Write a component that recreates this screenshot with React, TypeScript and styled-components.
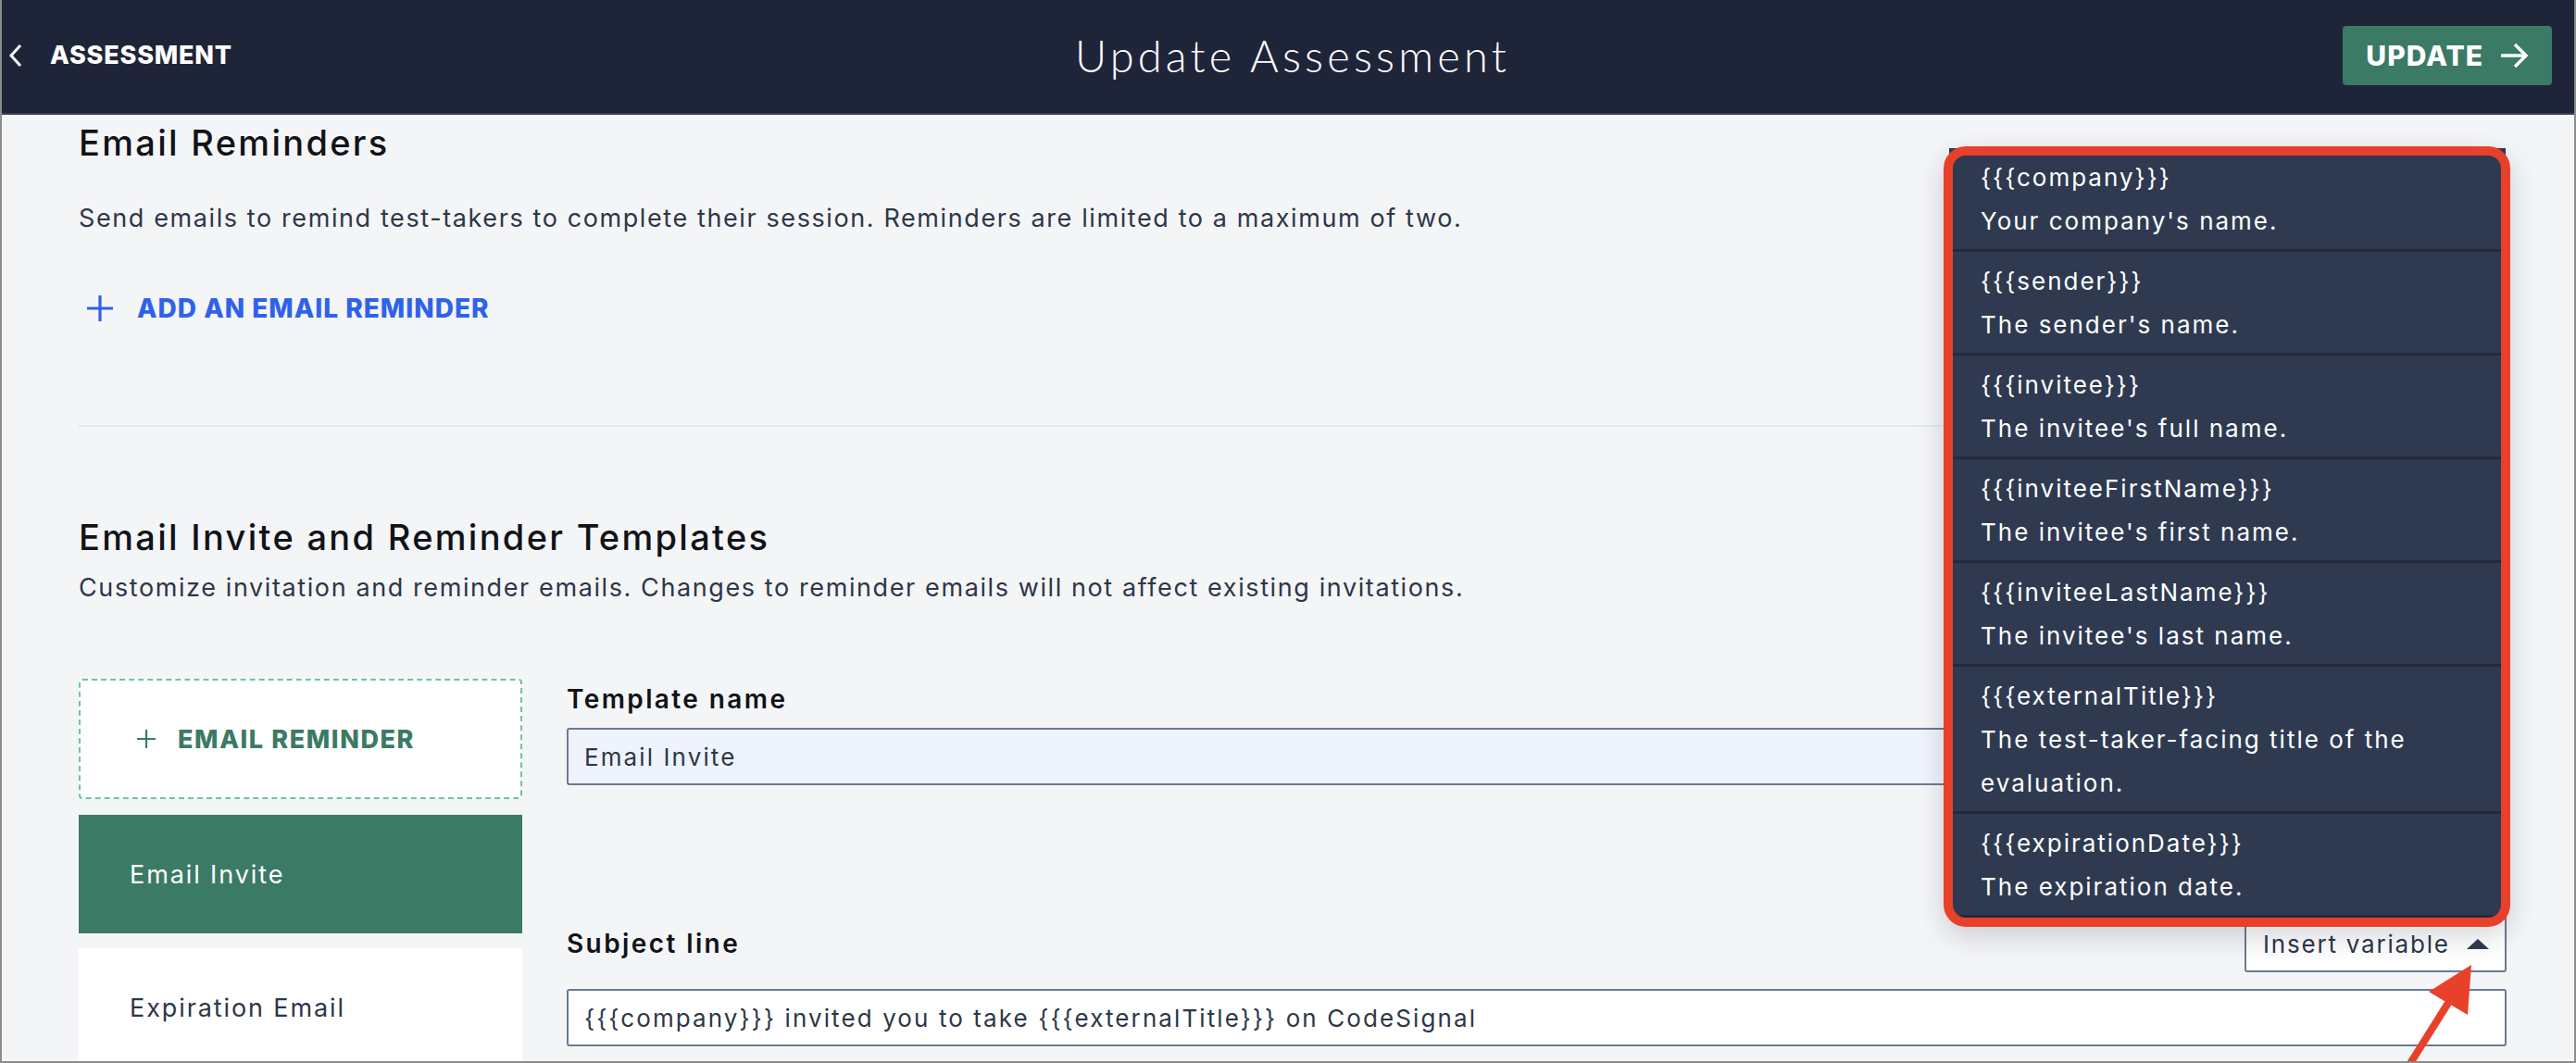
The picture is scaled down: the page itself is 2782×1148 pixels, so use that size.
import React from 'react'
import styled, {createGlobalStyle} from 'styled-components'

const GlobalStyle = createGlobalStyle`
  html, body {
    margin: 0;
    padding: 0;
  }

  body {
    font-family: Inter, "Noto Sans", sans-serif;
    background-color: #f4f5f7;
  }
`

interface Variable {
    name: string
    description: string
}

const variables: Variable[] = [
    {name: '{{{company}}}', description: 'Your company\'s name.'},
    {name: '{{{sender}}}', description: 'The sender\'s name.'},
    {name: '{{{invitee}}}', description: 'The invitee\'s full name.'},
    {name: '{{{inviteeFirstName}}}', description: 'The invitee\'s first name.'},
    {name: '{{{inviteeLastName}}}', description: 'The invitee\'s last name.'},
    {name: '{{{externalTitle}}}', description: 'The test-taker-facing title of the evaluation.'},
    {name: '{{{expirationDate}}}', description: 'The expiration date.'},
]

const Frame = styled.div`
  box-sizing: border-box;
  width: 2782px;
  height: 1148px;
  border: 2px solid #8c8c8c;
  border-top: none;
  overflow: hidden;
  display: flex;
  flex-direction: column;
  background-color: #f4f5f7;
`

const Header = styled.header`
  box-sizing: border-box;
  height: 124px;
  flex-shrink: 0;
  background-color: #1f2539;
  border-bottom: 2px solid #3a4058;
  display: grid;
  grid-template-columns: 1fr auto 1fr;
  align-items: center;
  padding: 0 16px 3px;
`

const BackLink = styled.div`
  margin-left: -8px;
  display: flex;
  align-items: center;
  gap: 30px;
  color: #ffffff;
  font-size: 27px;
  font-weight: 800;
  letter-spacing: 0.8px;
`

const Title = styled.h1`
  margin: 0;
  padding-left: 10px;
  font-family: Lato, sans-serif;
  font-size: 47px;
  font-weight: 300;
  letter-spacing: 4.2px;
  color: #ffffff;
`

const UpdateButton = styled.button`
  justify-self: end;
  margin-right: 8px;
  display: flex;
  align-items: center;
  gap: 18px;
  height: 64px;
  padding: 0 25px;
  border: none;
  border-radius: 4px;
  background-color: #3b7a65;
  color: #ffffff;
  font-family: inherit;
  font-size: 30px;
  font-weight: 800;
  letter-spacing: 1px;
`

const Content = styled.main`
  flex: 1;
  padding: 8px 73px 0 83px;
`

const SectionTitle = styled.h2<{ $top?: number }>`
  margin: ${(p) => p.$top || 0}px 0 0;
  font-size: 38px;
  line-height: 44px;
  font-weight: 500;
  letter-spacing: 2.3px;
  color: #111318;
`

const SectionText = styled.p<{ $top: number }>`
  margin: ${(p) => p.$top}px 0 0;
  font-size: 27px;
  line-height: 40px;
  letter-spacing: 1.6px;
  color: #2d3748;
`

const AddLink = styled.div`
  margin-top: 57px;
  padding-left: 9px;
  height: 40px;
  display: flex;
  align-items: center;
  gap: 26px;
  color: #2f62ea;
  font-size: 28px;
  font-weight: 800;
  letter-spacing: 1px;
`

const Divider = styled.hr`
  margin: 106px 0 0;
  height: 2px;
  border: none;
  background-color: #e2e7f6;
`

const Editor = styled.div`
  margin-top: 78px;
  display: grid;
  grid-template-columns: 479px 1fr;
  gap: 48px;
`

const Sidebar = styled.div`
  display: flex;
  flex-direction: column;
  gap: 16px;
`

const AddCard = styled.div`
  box-sizing: border-box;
  height: 130px;
  margin-bottom: 1px;
  padding-left: 61px;
  display: flex;
  align-items: center;
  gap: 24px;
  background-color: #ffffff;
  border: 2px dashed #6cc4a4;
  border-radius: 4px;
  color: #3b7a65;
  font-size: 27px;
  font-weight: 800;
  letter-spacing: 1.6px;
`

const TemplateCard = styled.div<{ $active?: boolean }>`
  height: 128px;
  flex-shrink: 0;
  padding-left: 55px;
  display: flex;
  align-items: center;
  background-color: ${(p) => p.$active ? '#3b7a65' : '#ffffff'};
  color: ${(p) => p.$active ? '#ffffff' : '#2d3748'};
  font-size: 27px;
  letter-spacing: 1.9px;
`

const Form = styled.div`
  display: flex;
  flex-direction: column;
`

const Label = styled.label<{ $top?: number }>`
  margin-top: ${(p) => p.$top ?? 4}px;
  font-size: 28px;
  line-height: 36px;
  font-weight: 600;
  letter-spacing: 2.4px;
  color: #111318;
`

const Field = styled.div<{ $top: number, $tinted?: boolean }>`
  box-sizing: border-box;
  height: 62px;
  margin-top: ${(p) => p.$top}px;
  padding: 0 17px;
  display: flex;
  align-items: center;
  background-color: ${(p) => p.$tinted ? '#eff3fc' : '#ffffff'};
  border: 2px solid #6b7a93;
  border-radius: 3px;
  color: #2d3748;
  font-size: 26px;
  letter-spacing: 2.1px;
`

const SubjectRow = styled.div`
  margin-top: 140px;
  display: flex;
  justify-content: space-between;
  align-items: center;
`

const InsertWrap = styled.div`
  position: relative;
`

const InsertButton = styled.button`
  box-sizing: border-box;
  width: 283px;
  height: 62px;
  padding: 0 17px 0 18px;
  display: flex;
  align-items: center;
  justify-content: space-between;
  background-color: #ffffff;
  border: 2px solid #6b7a93;
  border-radius: 3px;
  color: #2d3748;
  font-family: inherit;
  font-size: 26px;
  letter-spacing: 1.8px;
`

const Caret = styled.span`
  width: 0;
  height: 0;
  border-left: 12px solid transparent;
  border-right: 12px solid transparent;
  border-bottom: 11px solid #2d3a50;
`

const Menu = styled.ul`
  position: absolute;
  right: 1px;
  bottom: calc(100% - 3px);
  width: 601px;
  margin: 0;
  padding: 0;
  list-style: none;
  background-color: #2f3a51;
  border-radius: 0 0 10px 10px;
`

const MenuItem = styled.li`
  padding: 8px 60px 7px 34px;
  font-size: 26px;
  line-height: 47px;
  letter-spacing: 2px;
  color: #ffffff;
  border-bottom: 3px solid #232a3b;

  &:last-child {
    border-bottom: none;
  }
`

// callout ring drawn around the open menu
const Highlight = styled.div`
  position: absolute;
  top: -2px;
  left: -6px;
  right: -5px;
  bottom: -10px;
  border: 10px solid #e8402b;
  border-radius: 24px;
  box-shadow: 0 10px 30px rgba(20, 28, 45, 0.18);
  pointer-events: none;
`

const Pointer = styled.svg`
  position: absolute;
  left: 176px;
  top: 47px;
  width: 80px;
  height: 115px;
  pointer-events: none;
`

const App: React.FC = () => {
    return (
        <Frame>
            <GlobalStyle/>
            <Header>
                <BackLink>
                    <svg width="14" height="24" viewBox="0 0 14 24" fill="none">
                        <polyline points="12,1 2,12 12,23" stroke="#ffffff" strokeWidth="3" strokeLinejoin="miter"/>
                    </svg>
                    ASSESSMENT
                </BackLink>
                <Title>Update Assessment</Title>
                <UpdateButton>
                    UPDATE
                    <svg width="31" height="28" viewBox="0 0 31 28" fill="none">
                        <line x1="1" y1="14" x2="28" y2="14" stroke="#ffffff" strokeWidth="3.5"/>
                        <polyline points="16,2 28,14 16,26" stroke="#ffffff" strokeWidth="3.5"/>
                    </svg>
                </UpdateButton>
            </Header>

            <Content>
                <SectionTitle>Email Reminders</SectionTitle>
                <SectionText $top={40}>
                    Send emails to remind test-takers to complete their session. Reminders are limited to a maximum of two.
                </SectionText>
                <AddLink>
                    <svg width="28" height="28" viewBox="0 0 28 28">
                        <path d="M14 0v28M0 14h28" stroke="#2f62ea" strokeWidth="3.2"/>
                    </svg>
                    ADD AN EMAIL REMINDER
                </AddLink>
                <Divider/>

                <SectionTitle $top={97}>Email Invite and Reminder Templates</SectionTitle>
                <SectionText $top={13}>
                    Customize invitation and reminder emails. Changes to reminder emails will not affect existing invitations.
                </SectionText>

                <Editor>
                    <Sidebar>
                        <AddCard>
                            <svg width="20" height="20" viewBox="0 0 20 20">
                                <path d="M10 0v20M0 10h20" stroke="#3b7a65" strokeWidth="2.2"/>
                            </svg>
                            EMAIL REMINDER
                        </AddCard>
                        <TemplateCard $active>Email Invite</TemplateCard>
                        <TemplateCard>Expiration Email</TemplateCard>
                    </Sidebar>

                    <Form>
                        <Label>Template name</Label>
                        <Field $top={13} $tinted>Email Invite</Field>

                        <SubjectRow>
                            <Label as="span" $top={0}>Subject line</Label>
                            <InsertWrap>
                                <Menu>
                                    {variables.map((v) =>
                                        <MenuItem key={v.name}>
                                            <div>{v.name}</div>
                                            <div>{v.description}</div>
                                        </MenuItem>,
                                    )}
                                    <Highlight/>
                                </Menu>
                                <InsertButton>
                                    Insert variable
                                    <Caret/>
                                </InsertButton>
                                <Pointer viewBox="0 0 80 115">
                                    <line x1="2" y1="115" x2="46" y2="45" stroke="#e8402b" strokeWidth="8"/>
                                    <polygon points="23,36 69,7 65,61" fill="#e8402b"/>
                                </Pointer>
                            </InsertWrap>
                        </SubjectRow>
                        <Field $top={18}>{'{{{company}}} invited you to take {{{externalTitle}}} on CodeSignal'}</Field>
                    </Form>
                </Editor>
            </Content>
        </Frame>
    )
}

export default App
